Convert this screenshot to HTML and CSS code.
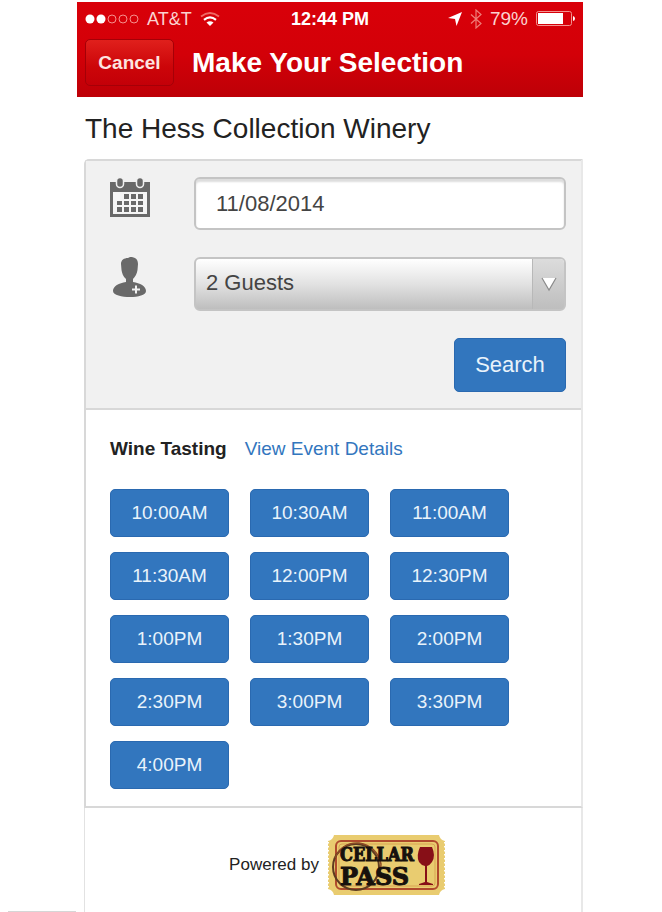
FILE: index.html
```html
<!DOCTYPE html>
<html lang="en">
<head>
    <meta charset="utf-8">
    <meta name="viewport" content="width=device-width, initial-scale=1">
    <title>Make Your Selection</title>
    <link rel="stylesheet" href="styles.css">
</head>
<body>
    <div class="gutter"></div>
    <div class="phone">
        <header class="topbar">
            <div class="statusbar">
                <div class="carrier">
                    <svg class="signal" width="54" height="12" viewBox="0 0 54 12" aria-hidden="true">
                        <circle cx="5" cy="6" r="4.5" fill="#fff"/>
                        <circle cx="16" cy="6" r="4.5" fill="#fff"/>
                        <g fill="none" stroke="#f58f8c" stroke-width="1">
                            <circle cx="27" cy="6" r="4"/>
                            <circle cx="38" cy="6" r="4"/>
                            <circle cx="49" cy="6" r="4"/>
                        </g>
                    </svg>
                    <span>AT&amp;T</span>
                    <svg width="20" height="14" viewBox="0 0 20 14" aria-hidden="true">
                        <path d="M1 4.5Q10-2.5 19 4.5" fill="none" stroke="#ee6a66" stroke-width="1.8"/>
                        <path d="M4 7.8Q10 3 16 7.8" fill="none" stroke="#fff" stroke-width="2.2"/>
                        <path d="M6.5 10.5Q10 7.8 13.5 10.5L10 14Z" fill="#fff"/>
                    </svg>
                </div>
                <div class="clock">12:44 PM</div>
                <div class="battery">
                    <svg width="14" height="14" viewBox="0 0 14 14" aria-hidden="true">
                        <path d="M14 0L8.5 14L7 7L0 6Z" fill="#fff"/>
                    </svg>
                    <svg width="12" height="20" viewBox="0 0 12 20" aria-hidden="true">
                        <path d="M1 5.5L11 14.5L6 19V1L11 5.5L1 14.5" fill="none" stroke="#ef7c78" stroke-width="1.2"/>
                    </svg>
                    <span>79%</span>
                    <svg width="39" height="16" viewBox="0 0 39 16" aria-hidden="true">
                        <rect x="0.5" y="0.5" width="35" height="14" rx="2" fill="none" stroke="#f2928f"/>
                        <rect x="2" y="2" width="25" height="11" fill="#fff"/>
                        <path d="M37 5Q39 5.500 39 7.500T37 10Z" fill="#fff"/>
                    </svg>
                </div>
            </div>
            <div class="navbar">
                <button type="button" class="cancel">Cancel</button>
                <h1>Make Your Selection</h1>
            </div>
        </header>

        <main class="content">
            <h2>The Hess Collection Winery</h2>

            <div class="panel">
                <form class="search-form">
                    <label for="date" aria-label="Date">
                        <svg width="40" height="40" viewBox="0 0 40 40" aria-hidden="true">
                            <path d="M0 5H40V40H0Z" fill="#696969"/>
                            <path d="M3 15H37V37H3Z" fill="#f5f5f5"/>
                            <g fill="#696969" stroke="#f1f1f1" stroke-width="1.5">
                                <rect x="6.500" y="0.500" width="7" height="10" rx="3.500"/>
                                <rect x="26.500" y="0.500" width="7" height="10" rx="3.500"/>
                            </g>
                            <path d="M14 17h5v5h-5zM21 17h5v5h-5zM28 17h5v5h-5zM7 24h5v4H7zM14 24h5v4h-5zM21 24h5v4h-5zM28 24h5v4h-5zM7 30h5v5H7zM14 30h5v5h-5zM21 30h5v5h-5zM28 30h5v5h-5z" fill="#696969"/>
                        </svg>
                    </label>
                    <input type="text" id="date" class="field" value="11/08/2014">

                    <label for="guests" aria-label="Guests">
                        <svg width="40" height="40" viewBox="0 0 40 40" aria-hidden="true">
                            <path d="M20 0C25.500 0 28 2.500 28 7L27.500 13C27 17 25 20 23 22V25C30 26 36 29 36 34C36 38 28 40 20 40S3 38 3 34C3 29 9 26 16 25V22C13 19.500 12 16 11.500 13L11 7C11 3 14 1 18 1Z" fill="#696969"/>
                            <path d="M26 28.500V36.500M22 32.500H30" stroke="#f1f1f1" stroke-width="2"/>
                        </svg>
                    </label>
                    <div class="select-wrap">
                        <select id="guests" class="field">
                            <option>1 Guest</option>
                            <option selected>2 Guests</option>
                            <option>3 Guests</option>
                            <option>4 Guests</option>
                        </select>
                        <span class="arrow">
                            <svg width="16" height="16" viewBox="0 0 16 16" aria-hidden="true">
                                <path d="M1 2H15L8 14Z" fill="#fff"/>
                                <path d="M1 2L8 14L15 2" fill="none" stroke="#8a8a8a" stroke-width="1.2"/>
                            </svg>
                        </span>
                    </div>

                    <button type="button" class="btn search">Search</button>
                </form>

                <section class="events">
                    <div class="event-title">
                        <h3>Wine Tasting</h3>
                        <a href="#">View Event Details</a>
                    </div>
                    <div class="slots">
                        <button type="button" class="btn">10:00AM</button>
                        <button type="button" class="btn">10:30AM</button>
                        <button type="button" class="btn">11:00AM</button>
                        <button type="button" class="btn">11:30AM</button>
                        <button type="button" class="btn">12:00PM</button>
                        <button type="button" class="btn">12:30PM</button>
                        <button type="button" class="btn">1:00PM</button>
                        <button type="button" class="btn">1:30PM</button>
                        <button type="button" class="btn">2:00PM</button>
                        <button type="button" class="btn">2:30PM</button>
                        <button type="button" class="btn">3:00PM</button>
                        <button type="button" class="btn">3:30PM</button>
                        <button type="button" class="btn">4:00PM</button>
                    </div>
                </section>
            </div>

            <footer class="powered">
                <span>Powered by</span>
                <svg class="logo" width="120" height="62" viewBox="0 0 120 62" role="img" aria-label="CellarPass">
                    <path d="M7 1H112Q113 6 118 7V55Q113 56 112 61H7Q6 56 1 55V7Q6 6 7 1Z" fill="#e9cc70"/>
                    <path d="M1 8V54M118 8V54" stroke="#fff" stroke-width="2" stroke-dasharray="1.500 2.500"/>
                    <rect x="9" y="7" width="102" height="48" rx="5" fill="none" stroke="#b04a2c" stroke-width="2"/>
                    <rect x="12" y="10" width="96" height="42" rx="3" fill="none" stroke="#d9a453" stroke-width="1"/>
                    <ellipse cx="29" cy="33" rx="23" ry="23" fill="none" stroke="#5d3b20" stroke-width="2"/>
                    <path d="M8 24Q15 8 32 9Q50 12 54 30L53 42" fill="none" stroke="#8b4a25" stroke-width="1.5"/>
                    <text x="13" y="27" class="logo-top">CELLAR</text>
                    <text x="13" y="51" class="logo-bottom">PASS</text>
                    <path d="M93 13H105Q109 22 105 28Q103 31 100 32V48L106 50V51H92V50L98 48V32Q94 31 92 28Q89 22 93 13Z" fill="#870f17"/>
                </svg>
            </footer>
        </main>
    </div>
</body>
</html>
```
FILE: styles.css
```css
* {
    box-sizing: border-box;
}
body {
    display: grid;
    grid-template-columns: 77px 1fr 79px;
    min-height: 100vh;
    margin: 0;
    padding-top: 2px;
    background: #fff;
    color: #222;
    font-family: "Liberation Sans", Arial, sans-serif;
    font-size: 19px;
}
h1, h2, h3 {
    margin: 0;
}
button, input, select {
    font-family: inherit;
}
.gutter {
    align-self: end;
    height: 2px;
    margin: 0 1px 0 8px;
    background: #d6d6d6;
}
.topbar {
    height: 95px;
    padding: 4px 8px 0;
    background: linear-gradient(#d90009, #d30008 55%, #bd0007);
    color: #fff;
}
.statusbar {
    display: grid;
    grid-template-columns: 1fr auto 1fr;
    align-items: center;
    height: 26px;
}
.carrier, .battery {
    display: flex;
    align-items: center;
    color: #fbd3d0;
}
.carrier {
    gap: 8px;
    font-size: 18px;
}
.battery {
    justify-content: flex-end;
    gap: 8px;
}
.clock {
    font-size: 18px;
    font-weight: bold;
}
.navbar {
    display: flex;
    align-items: center;
    gap: 18px;
    margin-top: 7px;
}
.cancel {
    width: 89px;
    height: 47px;
    padding: 0;
    border: 1px solid #a50007;
    border-radius: 5px;
    background: linear-gradient(#e0201c, #cc0509 60%, #c30008);
    color: #fde4e0;
    font-size: 19px;
    font-weight: bold;
}
h1 {
    font-size: 28px;
}
.content {
    padding-left: 7px;
}
h2 {
    padding: 2px 1px 0;
    font-size: 28px;
    font-weight: normal;
    line-height: 60px;
}
.panel {
    border: 2px solid #d8d8d8;
    border-right-color: #e8e8e8;
    border-top-left-radius: 5px;
}
.search-form {
    display: grid;
    grid-template-columns: 57px 1fr;
    gap: 27px;
    padding: 16px 15px 16px 24px;
    border-bottom: 2px solid #d8d8d8;
    background: #f1f1f1;
}
.field {
    display: block;
    width: 100%;
    height: 54px;
    border: 2px solid #c4c4c4;
    border-radius: 6px;
    background: #fff;
    color: #444;
    font-size: 22px;
}
input.field {
    height: 53px;
    padding: 0 20px;
    box-shadow: inset 0 3px 2px #ddd;
}
select.field {
    padding: 0 44px 3px 10px;
    appearance: none;
    background: linear-gradient(#fff, #e2e2e2 50%, #bebebe);
}
.select-wrap {
    position: relative;
}
.arrow {
    position: absolute;
    top: 2px;
    right: 2px;
    bottom: 2px;
    display: flex;
    align-items: center;
    justify-content: center;
    width: 32px;
    border-left: 1px solid #b8b8b8;
    border-radius: 0 4px 4px 0;
    background: linear-gradient(#dcdcdc, #bebebe);
    pointer-events: none;
}
.btn {
    height: 48px;
    padding: 0;
    border: 1px solid #2a69b0;
    border-radius: 5px;
    background: #3276be;
    color: #e9f3fb;
    font-size: 19px;
}
.search {
    grid-column: 2;
    justify-self: end;
    width: 112px;
    height: 54px;
    font-size: 22px;
}
.events {
    padding: 25px 15px 17px 24px;
}
.event-title {
    display: flex;
    align-items: baseline;
    gap: 18px;
    margin-bottom: 27px;
    line-height: 27px;
}
.event-title a {
    color: #3276be;
    text-decoration: none;
}
h3 {
    font-size: 19px;
}
.slots {
    display: grid;
    grid-template-columns: repeat(auto-fill, 119px);
    gap: 15px 21px;
}
.powered {
    display: flex;
    align-items: center;
    justify-content: center;
    gap: 8px;
    padding: 26px 0 16px 10px;
    border: 1px solid #e2e2e2;
    border-top: 0;
    border-right: 2px solid #e8e8e8;
    font-size: 17px;
}
.logo-top, .logo-bottom {
    fill: #17110d;
    stroke: #17110d;
    font-weight: bold;
}
.logo-top {
    font-family: "DejaVu Serif Condensed", "DejaVu Serif", serif;
    font-size: 18px;
}
.logo-bottom {
    font-family: "DejaVu Serif", serif;
    font-size: 24px;
}
```
